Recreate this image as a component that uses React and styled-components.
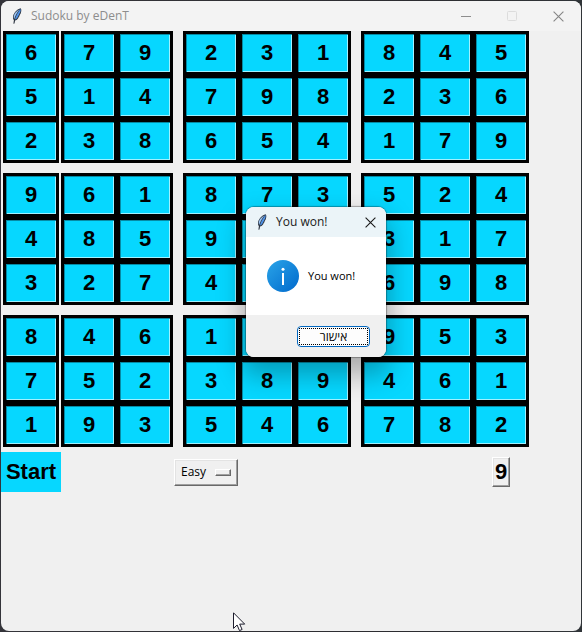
import React, { useState } from "react";
import styled, { createGlobalStyle } from "styled-components";

const UI_FONT = '"Open Sans", "Noto Sans", "DejaVu Sans", sans-serif';
const GRID_FONT = '"Liberation Sans", Arial, sans-serif';
const CYAN = "#06d7ff";
const FACE = "#f0f0f0";

const GlobalStyle = createGlobalStyle`
  * { box-sizing: border-box; }
  body { margin: 0; background: #303030; overflow: hidden; }
  button, input, select { font: inherit; color: inherit; margin: 0; }
`;

const Desktop = styled.div`
  min-height: 100vh;
  padding: 1px;
  display: flex;
  background: linear-gradient(90deg, #34343a, #2c2c30 70%, #303438);
  font-family: ${UI_FONT};
  font-size: 12px;
`;

const Window = styled.main`
  flex: 1;
  position: relative;
  border-radius: 8px;
  background: ${FACE};
  overflow: hidden;
`;

const TitleBar = styled.header`
  height: 30px;
  display: flex;
  align-items: center;
  padding-left: 9px;
  background: #f3f3f3;
  color: #8d8d8d;
`;

const Title = styled.h1`
  flex: 1;
  margin: 0 0 0 7px;
  font-size: 12px;
  line-height: 16px;
  font-weight: 400;
`;

const CaptionButton = styled.button`
  width: 46px;
  height: 30px;
  padding: 0;
  border: 0;
  background: transparent;
  display: flex;
  align-items: center;
  justify-content: center;
`;

const Board = styled.form`
  display: grid;
  grid-template-columns: 60px repeat(2, 56px) 10px repeat(3, 56px) 10px repeat(3, 56px);
  grid-template-rows: repeat(3, 44px) 10px repeat(3, 44px) 10px repeat(3, 44px) 50px;
  align-items: center;
  justify-items: center;
`;

const Cell = styled.input`
  grid-column: ${(p) => p.$col};
  grid-row: ${(p) => p.$row};
  width: 56px;
  height: 44px;
  padding: 0;
  border: 3px solid #000;
  border-radius: 0;
  outline: 0;
  box-shadow: inset 1px 1px #068aa4, inset -1px -1px #a0f1ff;
  background: ${CYAN};
  color: #000;
  text-align: center;
  font: bold 22px/36px ${GRID_FONT};
`;

const StartButton = styled.button`
  grid-column: 1;
  grid-row: 12;
  height: 40px;
  width: 60px;
  padding: 0;
  border: 0;
  background: ${CYAN};
  color: #000;
  font: bold 22px/40px ${GRID_FONT};
`;

const LevelMenu = styled.div`
  grid-column: 3 / 7;
  grid-row: 12;
  display: flex;
  align-items: center;
  width: 64px;
  height: 27px;
  padding-right: 6px;
  border: 1px solid;
  border-color: #fff #696969 #696969 #fff;
  box-shadow: inset -1px -1px #a0a0a0, inset 1px 1px #e3e3e3;
`;

const LevelSelect = styled.select`
  flex: 1;
  min-width: 0;
  height: 25px;
  padding: 0 0 0 6px;
  border: 0;
  appearance: none;
  background: transparent;
  font: 12px/16px ${UI_FONT};
  color: #000;
`;

const Indicator = styled.span`
  width: 16px;
  height: 7px;
  border: 1px solid;
  border-color: #fff #696969 #696969 #fff;
  box-shadow: inset -1px -1px #a0a0a0;
  pointer-events: none;
`;

const DigitButton = styled.button`
  grid-column: 11;
  grid-row: 12;
  width: 18px;
  height: 30px;
  padding: 0;
  border: 1px solid;
  border-color: #fff #696969 #696969 #fff;
  box-shadow: inset -1px -1px #a0a0a0, inset 1px 1px #e3e3e3;
  background: ${FACE};
  color: #000;
  font: bold 22px/26px ${GRID_FONT};
`;

const Dialog = styled.section`
  position: absolute;
  left: 245px;
  top: 206px;
  width: 140px;
  border-radius: 8px;
  background: #fff;
  color: #000;
  box-shadow: 0 0 1px 1px rgba(0, 0, 0, 0.3), 0 14px 26px 4px rgba(0, 0, 0, 0.28);
`;

const DialogBar = styled.header`
  height: 30px;
  display: flex;
  align-items: center;
  padding-left: 9px;
  border-radius: 8px 8px 0 0;
  background: #ebf4f8;
  color: #1a1a1a;
`;

const DialogTitle = styled.h2`
  flex: 1;
  margin: 0 0 0 7px;
  font-size: 12px;
  line-height: 16px;
  font-weight: 400;
`;

const DialogClose = styled(CaptionButton)`
  width: 31px;
`;

const DialogBody = styled.div`
  height: 78px;
  display: flex;
  align-items: center;
  gap: 9px;
  padding-left: 21px;
`;

const Message = styled.p`
  margin: 0;
  font-size: 11px;
  line-height: 16px;
`;

const DialogFooter = styled.footer`
  height: 42px;
  display: flex;
  align-items: center;
  justify-content: flex-end;
  padding-right: 16px;
  border-radius: 0 0 8px 8px;
  background: ${FACE};
`;

const OkButton = styled.button`
  width: 73px;
  height: 21px;
  padding: 1px;
  border: 1px solid #0067c0;
  border-radius: 4px;
  background: #fdfdfd;
`;

const FocusRing = styled.span`
  display: block;
  border: 1px dotted #000;
  font-size: 12px;
  line-height: 15px;
`;

const Pointer = styled.svg`
  position: absolute;
  left: 232px;
  top: 611px;
`;

const ROWS = [
  "679231845",
  "514798236",
  "238654179",
  "961873524",
  "485912317",
  "327465698",
  "846127953",
  "752389461",
  "193546782",
];

const track = (index) => index + 1 + Math.floor(index / 3);

function Feather() {
  return (
    <svg width="14" height="18" viewBox="0 0 14 18" aria-hidden="true">
      <path d="M10.6 1.200C7.2 2 3.600 5.700 3 9.200c-.2 1.800.1 3 .9 3.900l-.5 3.600 1.100-.1.600-3c2.200-.6 3.300-2.200 3.700-3.900l.9-.8-.2-.6 1.200-1.900c.8-2.400.9-4.300-.1-5.200Z" fill="#2c3440" />
      <path d="M10.3 2C8.300 4.900 6 8.500 4.900 12.500c1.900-.7 3-2 3.300-3.800l.9-.7-.2-.5 1.100-1.800c.7-1.700.9-2.900.3-3.700Z" fill="#4f91e6" />
      <path d="M9.600 2.300C6.600 4 3.800 7 3.700 9.800c0 1 .1 1.700.5 2.300C5.300 8.500 7.200 5.300 9.600 2.300Z" fill="#9cc4f2" />
    </svg>
  );
}

function Cross({ color }) {
  return (
    <svg width="11" height="11" viewBox="0 0 11 11" aria-hidden="true">
      <path d="M.6.6l9.8 9.8M10.4.6L.6 10.4" stroke={color} strokeWidth="1.1" fill="none" />
    </svg>
  );
}

function InfoIcon() {
  return (
    <svg width="32" height="32" viewBox="0 0 32 32" aria-hidden="true">
      <defs>
        <linearGradient id="info" x1="0" y1="0" x2="1" y2="1">
          <stop offset="0" stopColor="#2aa4e8" />
          <stop offset="1" stopColor="#0069cc" />
        </linearGradient>
      </defs>
      <circle cx="16" cy="16" r="16" fill="url(#info)" />
      <circle cx="16" cy="9.3" r="1.5" fill="#fff" />
      <path d="M16 13v12" stroke="#fff" strokeWidth="2" />
    </svg>
  );
}

export default function App() {
  const [level, setLevel] = useState("Easy");
  return (
    <Desktop>
      <GlobalStyle />
      <Window>
        <TitleBar>
          <Feather />
          <Title>Sudoku by eDenT</Title>
          <CaptionButton type="button" aria-label="Minimize">
            <svg width="10" height="11" viewBox="0 0 10 11"><path d="M0 5.5h10" stroke="#8d8d8d" /></svg>
          </CaptionButton>
          <CaptionButton type="button" aria-label="Maximize" disabled>
            <svg width="10" height="10" viewBox="0 0 10 10"><rect x=".5" y=".5" width="9" height="9" rx="1" fill="none" stroke="#dcdcdc" /></svg>
          </CaptionButton>
          <CaptionButton type="button" aria-label="Close">
            <Cross color="#858585" />
          </CaptionButton>
        </TitleBar>
        <Board onSubmit={(e) => e.preventDefault()}>
          {ROWS.map((row, r) =>
            [...row].map((digit, c) => (
              <Cell
                key={`${r}-${c}`}
                $row={track(r)}
                $col={track(c)}
                aria-label={`Row ${r + 1}, column ${c + 1}`}
                defaultValue={digit}
                maxLength={1}
              />
            ))
          )}
          <StartButton type="button">Start</StartButton>
          <LevelMenu>
            <LevelSelect aria-label="Difficulty" value={level} onChange={(e) => setLevel(e.target.value)}>
              <option>Easy</option>
              <option>Medium</option>
              <option>Hard</option>
            </LevelSelect>
            <Indicator />
          </LevelMenu>
          <DigitButton type="button">9</DigitButton>
        </Board>
        <Dialog role="dialog" aria-labelledby="dialog-title">
          <DialogBar>
            <Feather />
            <DialogTitle id="dialog-title">You won!</DialogTitle>
            <DialogClose type="button" aria-label="Close dialog">
              <Cross color="#1a1a1a" />
            </DialogClose>
          </DialogBar>
          <DialogBody>
            <InfoIcon />
            <Message>You won!</Message>
          </DialogBody>
          <DialogFooter>
            <OkButton type="button" lang="he" dir="rtl">
              <FocusRing>אישור</FocusRing>
            </OkButton>
          </DialogFooter>
        </Dialog>
        <Pointer width="13" height="20" viewBox="0 0 13 20" aria-hidden="true">
          <path d="M.5.8v15.6l3.6-3.4 2.4 5.6 2.6-1.1-2.4-5.4h5Z" fill="#fff" stroke="#1c1c2c" />
        </Pointer>
      </Window>
    </Desktop>
  );
}
